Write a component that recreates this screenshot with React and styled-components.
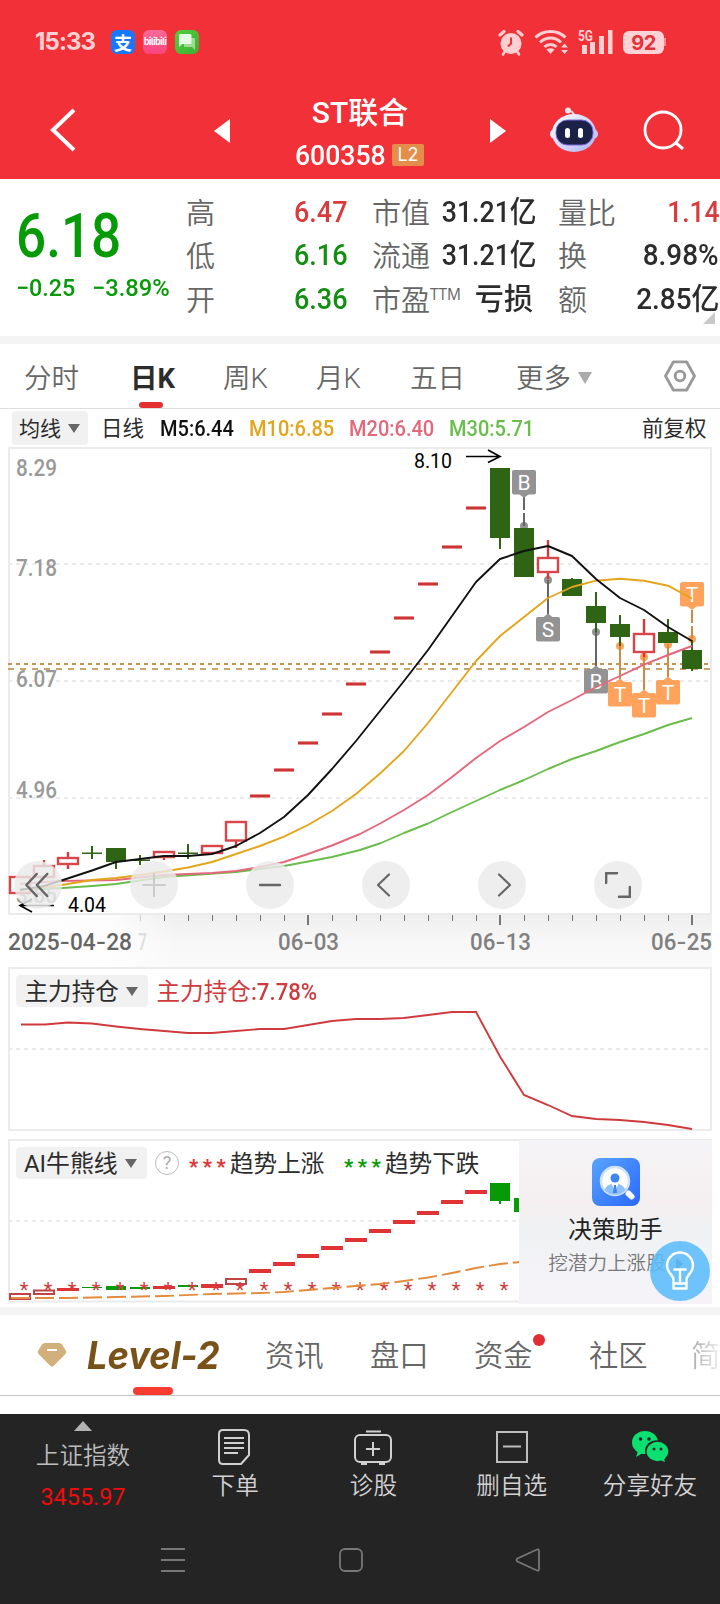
import React from "react";
import styled, { createGlobalStyle } from "styled-components";

const Global = createGlobalStyle`
  body { margin: 0; background: #fff; }
  * { box-sizing: border-box; }
  svg { display: block; flex: none; }
`;

const Page = styled.div`
  width: 720px;
  height: 1604px;
  overflow: hidden;
  display: flex;
  flex-direction: column;
  background: #fff;
  color: #333;
  font-family: Roboto, "Noto Sans CJK SC", sans-serif;
  white-space: nowrap;
`;

const Num = styled.span`
  display: inline-block;
  font-size: ${(p) => p.$size}px;
  line-height: ${(p) => p.$size}px;
  font-weight: ${(p) => p.$weight || 500};
  color: ${(p) => p.$color || "inherit"};
  transform: scaleX(${(p) => p.$sx || 0.9});
  transform-origin: ${(p) => p.$from || "left"} center;
`;

/* ---------- header ---------- */
const Header = styled.header`
  height: 179px;
  flex: none;
  background: #f23038;
  color: #fff;
`;
const StatusBar = styled.div`
  height: 80px;
  padding: 4px 54px 0 35px;
  display: flex;
  align-items: center;
  color: #ffd0d2;
`;
const AppBadges = styled.div`
  display: flex;
  gap: 8px;
  margin-left: 14px;
  flex: 1;
`;
const Clock = styled.div`
  width: 62px;
  font: 650 24px/28px Inter, sans-serif;
  letter-spacing: -0.9px;
`;
const AppBadge = styled.div`
  width: 24px;
  height: 24px;
  border-radius: 6px;
  background: ${(p) => p.$bg};
  display: flex;
  align-items: center;
  justify-content: center;
  color: #fff;
  font: 700 ${(p) => p.$size || 18}px/24px "Noto Sans CJK SC", sans-serif;
  letter-spacing: ${(p) => p.$ls || 0}px;
`;
const StatusIcons = styled.div`
  display: flex;
  align-items: center;
  gap: 10px;
`;
const Battery = styled.div`
  width: 41px;
  height: 23px;
  border-radius: 6px;
  background: #ffd3d5;
  color: #e2323a;
  text-align: center;
  font: 700 20px/24px Inter, sans-serif;
  letter-spacing: -0.5px;
`;
const BatteryNub = styled.div`
  width: 2px;
  height: 8px;
  margin-left: -10px;
  background: #fa8a8f;
`;
const NavBar = styled.div`
  height: 99px;
  display: flex;
  align-items: center;
  padding: 0 35px 0 49px;
`;
const NavTitle = styled.div`
  width: 260px;
  display: flex;
  flex-direction: column;
  align-items: center;
`;
const StockName = styled.div`
  font-size: 30px;
  line-height: 38px;
  height: 46px;
  font-weight: 500;
`;
const StockCode = styled.div`
  display: flex;
  align-items: center;
  gap: 7px;
  height: 26px;
  margin-right: 1px;
  position: relative;
  top: 2px;
`;
const LevelBadge = styled.span`
  width: 32px;
  height: 22px;
  border-radius: 2px;
  background: #e58d4a;
  font: 400 18px/22px Inter, sans-serif;
  text-align: center;
`;
const CodeBox = styled.span`
  width: 90px;
  height: 26px;
  line-height: 24px;
`;
const NavSlot = styled.div`
  width: ${(p) => p.$w}px;
  flex: none;
  display: flex;
  padding-top: ${(p) => p.$top || 0}px;
`;

/* ---------- quote ---------- */
const Quote = styled.section`
  height: 157px;
  flex: none;
  display: flex;
  position: relative;
`;
const PriceCol = styled.div`
  width: 186px;
  padding: 27px 0 0 16px;
  color: #079a07;
`;
const Changes = styled.div`
  display: flex;
  padding-top: 9px;
`;
const ChangeCell = styled.div`
  width: ${(p) => p.$w}px;
`;
const StatCol = styled.dl`
  margin: 0 ${(p) => p.$gap}px 0 0;
  width: ${(p) => p.$w}px;
  padding-top: 11px;
  flex: none;
`;
const Stat = styled.div`
  display: flex;
  justify-content: space-between;
  align-items: center;
  height: 43.5px;
`;
const StatLabel = styled.dt`
  font: 350 29px/40px "Noto Sans CJK SC", sans-serif;
  color: #666;
  margin-top: -2px;
  display: flex;
`;
const Sup = styled.sup`
  font: 400 15.5px/33px "Open Sans", sans-serif;
`;
const StatValue = styled.dd`
  margin: 0 ${(p) => p.$mr || 0}px 0 0;
  color: ${(p) => p.$color || "#2c2c2c"};
  font: 500 30px/40px Roboto, "Noto Sans CJK SC", sans-serif;
  transform: scaleX(${(p) => p.$sx || 0.9});
  transform-origin: right center;
`;
const Corner = styled.i`
  position: absolute;
  right: 5px;
  bottom: 12px;
  border-left: 12px solid transparent;
  border-bottom: 12px solid #c9c9c9;
`;
const Divider = styled.div`
  height: 8px;
  flex: none;
  background: #f4f4f4;
`;

/* ---------- period tabs ---------- */
const PeriodTabs = styled.nav`
  height: 65px;
  flex: none;
  border-bottom: 1px solid #dedede;
  display: flex;
  padding-left: 24px;
`;
const PeriodTab = styled.div`
  width: ${(p) => p.$w}px;
  height: 64px;
  padding-top: ${(p) => (p.$icon ? 0 : 4)}px;
  font-size: 27.5px;
  line-height: 59px;
  color: ${(p) => (p.$on ? "#2c2c2c" : "#666")};
  font-weight: ${(p) => (p.$on ? 700 : 350)};
  display: flex;
  align-items: center;
  gap: 7px;
  position: relative;
`;
const TabMark = styled.i`
  position: absolute;
  left: ${(p) => p.$x}px;
  bottom: 0;
  width: ${(p) => p.$w}px;
  height: ${(p) => p.$h}px;
  border-radius: 4px;
  background: ${(p) => p.$c};
`;
const Caret = styled.i`
  border: ${(p) => p.$s}px solid transparent;
  border-top: ${(p) => p.$h}px solid ${(p) => p.$c};
  border-bottom: 0;
`;

const MaRow = styled.div`
  height: 38px;
  flex: none;
  display: flex;
  align-items: center;
  padding-left: 12px;
`;
const Chip = styled.button`
  border: 0;
  margin: 0;
  width: ${(p) => p.$w}px;
  height: ${(p) => p.$h}px;
  border-radius: 4px;
  padding: 1px 0 0 ${(p) => p.$pad}px;
  background: #f1f1f1;
  display: flex;
  align-items: center;
  gap: 7px;
  color: #2c2c2c;
  font: 400 ${(p) => p.$size}px/32px Roboto, "Noto Sans CJK SC", sans-serif;
`;
const MaItem = styled.div`
  width: ${(p) => p.$w}px;
  margin-left: ${(p) => p.$ml}px;
  padding-top: 2px;
  color: ${(p) => p.$c || "#2c2c2c"};
  font-size: 21.5px;
  line-height: 30px;
`;

/* ---------- charts ---------- */
const ChartFrame = styled.section`
  height: ${(p) => p.$h}px;
  margin: 0 8px ${(p) => p.$mb || 0}px;
  flex: none;
  position: relative;
`;
const FloatBar = styled.div`
  position: absolute;
  left: 6px;
  top: 414px;
  display: flex;
  gap: 68px;
`;
const FloatButton = styled.button`
  width: 48px;
  height: 48px;
  border: 0;
  padding: 0;
  border-radius: 50%;
  background: rgba(234, 234, 234, 0.82);
  display: flex;
  align-items: center;
  justify-content: center;
`;
const PaneHead = styled.div`
  position: absolute;
  left: 8px;
  top: 8px;
  display: flex;
  align-items: center;
  height: 32px;
  font-size: 23.6px;
  line-height: 32px;
`;
const Legend = styled.span`
  margin-left: ${(p) => p.$ml || 0}px;
  padding-top: 2px;
  width: ${(p) => p.$w}px;
  color: ${(p) => p.$c || "#2c2c2c"};
`;
const Stars = styled.span`
  margin-left: ${(p) => p.$ml}px;
  width: 41px;
  color: ${(p) => p.$c};
  font: 800 20px/32px Roboto, sans-serif;
  letter-spacing: 4.6px;
  padding-top: 7px;
`;
const Help = styled.span`
  width: 24px;
  height: 24px;
  margin-left: 8px;
  border: 1.5px solid #bbb;
  border-radius: 50%;
  color: #aaa;
  text-align: center;
  font: 400 18px/22px Roboto, sans-serif;
`;
const Assistant = styled.aside`
  position: absolute;
  right: 0;
  top: 1px;
  width: 193px;
  height: 164px;
  padding-top: 18px;
  display: flex;
  flex-direction: column;
  align-items: center;
  background: linear-gradient(180deg, #f5f4f6 0%, #f5eff1 38%, #eff2f3 56%, #f4f3f7 80%, #f5f3f8 100%);
`;
const AssistantTitle = styled.div`
  margin-top: 7px;
  font-size: 23.6px;
  line-height: 35px;
  color: #222;
`;
const AssistantSub = styled.div`
  font-size: 19.6px;
  line-height: 32px;
  color: #777;
  font-weight: 350;
  display: flex;
  align-items: center;
  gap: 10px;
`;
const Play = styled.i`
  border-left: 7px solid #666;
  border-top: 6px solid transparent;
  border-bottom: 6px solid transparent;
`;
const Bulb = styled.button`
  position: absolute;
  right: 2px;
  bottom: 3px;
  width: 60px;
  height: 60px;
  border: 0;
  padding: 0;
  border-radius: 50%;
  background: rgba(92, 188, 252, 0.88);
  display: flex;
  align-items: center;
  justify-content: center;
`;

/* ---------- info tabs ---------- */
const InfoTabs = styled.nav`
  height: 81px;
  flex: none;
  display: flex;
  align-items: center;
  border-bottom: 1px solid #c6c6c6;
  padding-left: 37px;
  position: relative;
`;
const InfoTab = styled.div`
  width: ${(p) => p.$w}px;
  flex: none;
  padding-top: 2px;
  font-size: 29.3px;
  line-height: 40px;
  font-weight: 350;
  color: #666;
  position: relative;
`;
const FadedTab = styled(InfoTab)`
  background: linear-gradient(90deg, #aaa, #f0f0f0);
  -webkit-background-clip: text;
  background-clip: text;
  color: transparent;
`;
const RedDot = styled.i`
  position: absolute;
  left: 59px;
  top: 0;
  width: 12px;
  height: 12px;
  border-radius: 50%;
  background: #e02d31;
`;
const LevelTab = styled.div`
  width: 198px;
  flex: none;
  padding-left: 20px;
  color: #79521a;
  font: italic 700 38px/40px Inter, sans-serif;
`;
const LevelText = styled.span`
  display: inline-block;
  transform: scaleX(0.955);
  transform-origin: left center;
`;

/* ---------- bottom ---------- */
const Footer = styled.footer`
  margin-top: 18px;
  height: 190px;
  flex: none;
  background: #242424;
`;
const Actions = styled.div`
  display: flex;
  height: 110px;
`;
const IndexCell = styled.div`
  width: 166px;
  display: flex;
  flex-direction: column;
  align-items: center;
  padding-top: 7px;
  color: #bdbdbd;
  font-size: 23.6px;
  line-height: 34px;
  font-weight: 350;
`;
const UpCaret = styled.i`
  border: 9px solid transparent;
  border-top: 0;
  border-bottom: 10px solid #b3b3b3;
  margin-bottom: 8px;
`;
const IndexValue = styled.div`
  color: #ee0c0c;
  font: 400 23.4px/30px Roboto, sans-serif;
  margin-top: 9px;
`;
const Action = styled.div`
  width: 138.3px;
  display: flex;
  flex-direction: column;
  align-items: center;
  padding-top: 15px;
  color: #d2d2d2;
  font-size: 23.6px;
  line-height: 34px;
  font-weight: 350;
  gap: 4px;
`;
const SystemNav = styled.div`
  display: flex;
  justify-content: space-between;
  padding: 23px 179px 0 160px;
`;

/* ---------- data ---------- */
const X = (i) => 20 + 24 * i;

/* index, kind, body top, body bottom, wick top, wick bottom */
const candles = [
  [0, "u", 877, 893, 877, 893], [1, "u", 866, 877, 860, 877], [2, "u", 858, 864, 852, 869],
  [3, "g", 852.5, 854, 846, 859], [4, "g", 848, 862, 848, 869], [5, "g", 859.5, 861, 855, 865],
  [6, "u", 852, 857, 851, 860], [7, "g", 852.5, 854, 844, 859], [8, "u", 846, 853, 845, 853],
  [9, "u", 822, 840.5, 822, 848], [20, "g", 468, 538, 468, 549], [21, "g", 528, 577, 528, 577],
  [22, "u", 558, 572, 540, 579], [23, "g", 579, 596, 578, 596], [24, "g", 606, 623, 592, 632],
  [25, "g", 624, 637, 615, 646], [26, "u", 634, 652, 619, 657], [27, "g", 632, 643, 619, 643],
  [28, "g", 650, 669, 640, 671],
];
const limitUps = [796, 770, 743, 714, 684, 652, 618, 584, 547, 508];

const averages = [
  ["#69bd4a", "20,889 44,889 63,888 92,886 116,884 164,877 236,872 284,866 332,857 360,850 381,843 404,833 428,823.5 452,812 476,801 500,790 524,780 548,769 572,759 596,751 620,742 644,734 668,725 692,718"],
  ["#e4677c", "20,884 44,882 63,881 116,880 140,877.5 164,875 212,873 236,871 260,867 284,862 308,854 332,845.5 360,834 381,823 404,810 428,795 452,777 476,758 500,741 524,727 548,712 572,700 596,687 620,676 644,664.7 668,655 692,646"],
  ["#e3a51c", "20,890 44,887 63,884.7 92,880 116,878 140,875 164,871.5 188,867.5 212,862 236,854 260,846 284,836.7 308,825 332,811 356,794 380,773.5 404,751 428,723 452,692 476,661 500,636 524,617 548,598 572,587 596,580.7 620,578.7 644,580.7 668,585.7 692,598.7"],
  ["#111", "20,890 44,886 63,880 92,870.5 116,862 140,859 164,856 188,856 212,854 236,846 260,833 284,817 308,795 332,769 356,741 380,711 404,681 428,650 452,616 476,582 500,559 524,551 548,546 572,556 596,579 620,598 644,610 668,627 692,641"],
];

/* letter, colour, x, box top, dot y */
const markers = [
  ["B", "#939393", 524, 470, 526], ["S", "#939393", 548, 617, 580], ["B", "#939393", 596, 669, 632],
  ["T", "#ffa35c", 620, 682, 646], ["T", "#ffa35c", 668, 680, 644.5], ["T", "#ffa35c", 644, 693, 657],
  ["T", "#ffa35c", 692, 582, 639],
];

const bearCandles = [
  [0, "h", 1294, 1299], [1, "h", 1290.5, 1294], [2, "r", 1288, 1291], [3, "g", 1287, 1288], [4, "g", 1286, 1290],
  [5, "g", 1287, 1289], [6, "r", 1286, 1289], [7, "g", 1285, 1287], [8, "r", 1284, 1288], [9, "h", 1279, 1284],
  ...[1271, 1264, 1256, 1248, 1240, 1231, 1222, 1213, 1202, 1192].map((y, k) => [10 + k, "r", y - 2, y + 2]),
  [20, "g", 1183, 1201], [21, "g", 1198, 1212],
];

const Label = ({ x, y, w, size = 23, fill = "#999", weight = 500, children }) => (
  <text x={x} y={y} textLength={w} lengthAdjust="spacingAndGlyphs" fontFamily="Roboto" fontSize={size} fill={fill} fontWeight={weight}>
    {children.split(/(-)/).map((s, i) => (s === "-" ? <tspan key={i} fontFamily="Inter">-</tspan> : s))}
  </text>
);

const Grid = ({ ys }) => ys.map((y) => (
  <line key={y} x1="8" x2="710" y1={y} y2={y} stroke="#ebebeb" strokeWidth="2" strokeDasharray="4 4" />
));

const Marker = ({ m: [t, c, x, top, dot] }) => {
  const above = dot > top;
  const end = above ? top + 26 : top - 3;
  return (
    <g>
      <circle cx={x} cy={dot} r="4" fill={c} />
      <line x1={x} x2={x} y1={dot} y2={end} stroke={c === "#939393" ? "#666" : "#cf8c3e"} strokeWidth="2" strokeDasharray={above ? "13 3" : undefined} />
      <rect x={x - 12} y={top} width="24" height="24.5" rx="2" fill={c} />
      <path d={above ? `M${x - 5} ${top + 24}h10l-5 4z` : `M${x - 5} ${top + 0.5}h10l-5-4z`} fill={c} />
      <text x={x} y={top + 19.5} textAnchor="middle" fontFamily="Roboto" fontSize="21" fill="#fff">{t}</text>
    </g>
  );
};

const KChart = () => (
  <svg width="704" height="520" viewBox="8 447 704 520">
    <defs>
      <linearGradient id="band" x2="0" y2="1"><stop stopColor="#eeeeee" /><stop offset="0.5" stopColor="#f7f7f7" /><stop offset="1" stopColor="#fafafa" /></linearGradient>
      <linearGradient id="fade"><stop stopColor="#fff" /><stop offset="0.6" stopColor="#fff" stopOpacity="0.8" /><stop offset="1" stopColor="#fff" stopOpacity="0" /></linearGradient>
    </defs>
    <rect x="8" y="914" width="704" height="53" fill="url(#band)" />
    <rect x="8" y="915" width="170" height="52" fill="url(#fade)" />
    <rect x="9" y="448" width="702" height="466" fill="#fff" stroke="#ebebeb" strokeWidth="2" />
    <Grid ys={[564, 681, 798]} />
    <line x1="8" x2="710" y1="664" y2="664" stroke="#c99450" strokeWidth="2" strokeDasharray="4 4" />
    <line x1="8" x2="710" y1="669" y2="669" stroke="#c9a56c" strokeWidth="2" strokeDasharray="6 6" />
    <Label x={16} y={476} w={41}>8.29</Label>
    <Label x={16} y={576} w={41}>7.18</Label>
    <Label x={16} y={687} w={41}>6.07</Label>
    <Label x={16} y={798} w={41}>4.96</Label>
    <Label x={16} y={903} w={41}>3.85</Label>
    {markers.map((m, i) => <Marker key={i} m={m} />)}
    {limitUps.map((y, k) => (
      <g key={k}>
        <rect x={X(10 + k) - 10} y={y - 2} width="20" height="4" fill="#ea8c8c" />
        <rect x={X(10 + k) - 10} y={y - 1} width="20" height="2" fill="#c93636" />
      </g>
    ))}
    {candles.map(([i, k, t, b, wt, wb]) => k === "g" ? (
      <g key={i} fill="#2f6414">
        <rect x={X(i) - 10} y={t} width="20" height={b - t} />
        <rect x={X(i) - 1} y={wt} width="2" height={wb - wt} />
      </g>
    ) : (
      <g key={i}>
        <path d={`M${X(i)} ${wt}V${wb}`} stroke="#d9383a" strokeWidth="2.4" />
        <rect x={X(i) - 10} y={t} width="20" height={b - t} fill="#fff" stroke="#d9454a" strokeWidth="2.4" />
      </g>
    ))}
    {averages.map(([c, pts]) => <polyline key={c} points={pts} fill="none" stroke={c} strokeWidth="1.9" strokeLinejoin="round" />)}
    <Label x={414} y={468} w={38} size={20} fill="#000" weight={400}>8.10</Label>
    <path d="M466 456.500H500M488 450L500 456.500L488 462.500" fill="none" stroke="#000" strokeWidth="1.7" />
    <Label x={68} y={912} w={38} size={20} fill="#000" weight={400}>4.04</Label>
    <path d="M54 905.500H20M32 899L20 905.500L32 912" fill="none" stroke="#000" strokeWidth="1.7" />
    {Array.from({ length: 24 }, (_, k) => k + 5).map((i) => (
      <rect key={i} x={X(i) - (i % 8 === 4 ? 1 : 0)} y="915" width={i % 8 === 4 ? 2 : 1} height={i % 8 === 4 ? 10 : 6} fill="#777" opacity={i === 5 ? 0.3 : 1} />
    ))}
    <Label x={8} y={950} w={124} fill="#666">2025-04-28</Label>
    <Label x={138} y={950} w={9} fill="#ddd">7</Label>
    <Label x={278} y={950} w={61} fill="#808080">06-03</Label>
    <Label x={470} y={950} w={61} fill="#808080">06-13</Label>
    <Label x={651} y={950} w={61} fill="#808080">06-25</Label>
  </svg>
);

const HoldingChart = () => (
  <svg width="704" height="165" viewBox="8 967 704 165">
    <rect x="9" y="968" width="702" height="162" fill="#fff" stroke="#ebebeb" strokeWidth="2" />
    <Grid ys={[1049]} />
    <polyline fill="none" stroke="#cf3b3d" strokeWidth="1.9" points="21,1024.5 45,1024.5 68,1022.5 92,1023.5 116,1026.500 140,1029 164,1031 188,1033 212,1033 236,1031 260,1029 284,1029 308,1025 332,1021 356,1019 380,1019 404,1018 428,1015 452,1012 476,1012 500,1056.500 524,1095 548,1105 572,1116 596,1119 620,1120 644,1122 668,1125 692,1129" />
  </svg>
);

const TrendChart = () => (
  <svg width="704" height="165" viewBox="8 1139 704 165">
    <rect x="9" y="1140" width="702" height="161.500" fill="#fff" stroke="#ebebeb" strokeWidth="2" />
    <Grid ys={[1221]} />
    {bearCandles.map(([i, k, t, b]) => k === "h"
      ? <rect key={i} x={X(i) - 10} y={t} width="20" height={b - t} fill="#fff" stroke="#c04444" strokeWidth="2" />
      : <rect key={i} x={X(i) - (k === "r" ? 11 : 10)} y={t} width={k === "r" ? 22 : 20} height={b - t} fill={k === "r" ? "#df3336" : "#079a07"} />)}
    <rect x="499" y="1201" width="2" height="3" fill="#079a07" />
    {Array.from({ length: 21 }, (_, i) => (
      <text key={i} x={24 + 24 * i} y="1297" textAnchor="middle" fontFamily="Roboto" fontSize="20" fill="#cf3c3c">*</text>
    ))}
    <polyline fill="none" stroke="#e38a3c" strokeWidth="1.9" strokeDasharray="19 5" strokeDashoffset="-1" points="10,1298 68,1298 116,1297 164,1296 212,1294 260,1293 284,1292 308,1290 332,1288 356,1286 380,1284 404,1281 428,1277.500 452,1273 476,1268 500,1264 520,1262" />
  </svg>
);

const Glyph = ({ d, c = "#666", w = 2, size = 24 }) => (
  <svg width={size} height={size} viewBox="0 0 24 24"><path d={d} fill="none" stroke={c} strokeWidth={w} strokeLinecap="round" strokeLinejoin="round" /></svg>
);

export default function App() {
  return (
    <Page>
      <Global />
      <Header>
        <StatusBar>
          <Clock>15:33</Clock>
          <AppBadges>
            <AppBadge $bg="#1677ff">支</AppBadge>
            <AppBadge $bg="linear-gradient(#fb6a98,#f9447d)" $size={9} $ls={-0.7}>bilibili</AppBadge>
            <AppBadge $bg="linear-gradient(135deg,#50cf3f,#3fae30)">
              <svg width="24" height="24" viewBox="0 0 24 24">
                <path d="M9 8h10a1 1 0 0 1 1 1v11l-3-3H9z" fill="#9ed996" />
                <path d="M5 4h10a1.500 1.500 0 0 1 1.500 1.500V12A1.500 1.500 0 0 1 15 14H7l-3 3V5.500A1.500 1.500 0 0 1 5 4z" fill="#e6fbe3" />
              </svg>
            </AppBadge>
          </AppBadges>
          <StatusIcons>
            <svg width="26" height="27" viewBox="0 0 26 27">
              <circle cx="13" cy="14.500" r="10.500" fill="#ffd0d2" />
              <path d="M2 6L6 2.500M24 6L20 2.500" stroke="#ffd0d2" strokeWidth="3.200" strokeLinecap="round" />
              <path d="M6.500 23l-1.500 2.500M19.500 23l1.500 2.500" stroke="#ffd0d2" strokeWidth="2.500" strokeLinecap="round" />
              <path d="M13 8.500v6l-3 3" stroke="#f23038" strokeWidth="2" fill="none" />
            </svg>
            <svg width="34" height="26" viewBox="0 0 34 26">
              <g fill="none" stroke="#ffd0d2" strokeWidth="3">
                <path d="M1.500 8.500C9.500 .5 23.500 .5 31.500 8.500" /><path d="M6 13.500c6-6 15-6 21 0" /><path d="M10.500 18c3.500-3.500 8.500-3.500 12 0" />
              </g>
              <path d="M16.500 25l-4-4.500q4-2.500 8 0z" fill="#ffd0d2" />
              <path d="M27 18.500h7l-3.500-4zM27 21h7l-3.500 4z" fill="#ffd0d2" />
            </svg>
            <svg width="35" height="26" viewBox="0 0 35 26" fill="#ffd0d2">
              <text x="0" y="11.500" fontFamily="Roboto" fontWeight="700" fontSize="14" textLength="15" lengthAdjust="spacingAndGlyphs">5G</text>
              <rect x="4" y="16" width="5" height="9" /><rect x="12" y="13" width="5" height="12" /><rect x="21" y="7" width="5" height="18" /><rect x="30" y="1" width="4.500" height="24" />
            </svg>
            <Battery>92</Battery>
            <BatteryNub />
          </StatusIcons>
        </StatusBar>
        <NavBar>
          <NavSlot $w={165}>
            <svg width="28" height="44" viewBox="0 0 28 44"><path d="M25 2L4 22L25 42" fill="none" stroke="#fff" strokeWidth="4" /></svg>
          </NavSlot>
          <NavSlot $w={16} $top={3}>
            <svg width="16" height="24" viewBox="0 0 16 24"><path d="M16 0V24L0 12z" fill="#fff" /></svg>
          </NavSlot>
          <NavTitle>
            <StockName>ST联合</StockName>
            <StockCode>
              <CodeBox><Num $size={28} $sx={0.95}>600358</Num></CodeBox>
              <LevelBadge>L2</LevelBadge>
            </StockCode>
          </NavTitle>
          <NavSlot $w={60} $top={3}>
            <svg width="16" height="24" viewBox="0 0 16 24"><path d="M0 0V24L16 12z" fill="#fff" /></svg>
          </NavSlot>
          <NavSlot $w={93}>
            <svg width="48" height="46" viewBox="0 0 48 46">
              <defs><linearGradient id="bot" x2="1" y2="1"><stop stopColor="#fff" /><stop offset="1" stopColor="#aeb2f2" /></linearGradient></defs>
              <path d="M17 4q7-1 7 6" fill="none" stroke="#f3d9ea" strokeWidth="2" /><circle cx="18" cy="3.500" r="3" fill="#f5e3ee" />
              <circle cx="5" cy="27" r="5" fill="#f1f1ff" /><circle cx="43" cy="27" r="5" fill="#c9ccf8" />
              <ellipse cx="24" cy="26" rx="22" ry="19" fill="url(#bot)" />
              <rect x="6" y="13" width="37" height="25" rx="11.500" fill="#1c2247" stroke="#7a6be0" strokeWidth="1" />
              <rect x="15" y="21" width="5" height="10" rx="2.500" fill="#fff" /><rect x="28" y="21" width="5" height="10" rx="2.500" fill="#fff" />
            </svg>
          </NavSlot>
          <NavSlot $w={42} $top={2}>
            <svg width="42" height="42" viewBox="0 0 42 42"><circle cx="20" cy="20" r="18" fill="none" stroke="#fff" strokeWidth="2.800" /><path d="M32 32L40 39" stroke="#fff" strokeWidth="3" /></svg>
          </NavSlot>
        </NavBar>
      </Header>

      <Quote>
        <PriceCol>
          <Num $size={61} $sx={0.87}>6.18</Num>
          <Changes>
            <ChangeCell $w={76}><Num $size={24} $sx={0.97}>−0.25</Num></ChangeCell>
            <ChangeCell $w={80}><Num $size={24} $sx={0.985}>−3.89%</Num></ChangeCell>
          </Changes>
        </PriceCol>
        <StatCol $w={161} $gap={25}>
          <Stat><StatLabel>高</StatLabel><StatValue $color="#d93a3a">6.47</StatValue></Stat>
          <Stat><StatLabel>低</StatLabel><StatValue $color="#118f11">6.16</StatValue></Stat>
          <Stat><StatLabel>开</StatLabel><StatValue $color="#118f11">6.36</StatValue></Stat>
        </StatCol>
        <StatCol $w={159} $gap={27}>
          <Stat><StatLabel>市值</StatLabel><StatValue $sx={0.89} $mr={2}>31.21亿</StatValue></Stat>
          <Stat><StatLabel>流通</StatLabel><StatValue $sx={0.89} $mr={2}>31.21亿</StatValue></Stat>
          <Stat><StatLabel>市盈<Sup>TTM</Sup></StatLabel><StatValue $sx={0.97} $mr={-2}>亏损</StatValue></Stat>
        </StatCol>
        <StatCol $w={161} $gap={0}>
          <Stat><StatLabel>量比</StatLabel><StatValue $color="#d93a3a" $sx={0.88}>1.14</StatValue></Stat>
          <Stat><StatLabel>换</StatLabel><StatValue $sx={0.93}>8.98%</StatValue></Stat>
          <Stat><StatLabel>额</StatLabel><StatValue $sx={0.93}>2.85亿</StatValue></Stat>
        </StatCol>
        <Corner />
      </Quote>
      <Divider />

      <PeriodTabs>
        <PeriodTab $w={106}>分时</PeriodTab>
        <PeriodTab $w={93} $on>日K<TabMark $x={9} $w={24} $h={6} $c="#e53033" /></PeriodTab>
        <PeriodTab $w={93}>周K</PeriodTab>
        <PeriodTab $w={94}>月K</PeriodTab>
        <PeriodTab $w={106}>五日</PeriodTab>
        <PeriodTab $w={148}>更多<Caret $s={7.5} $h={12} $c="#aaa" /></PeriodTab>
        <PeriodTab $w={32} $icon>
          <svg width="32" height="32" viewBox="0 0 32 32" fill="none" stroke="#999"><path d="M9.500 1.800h13L30.500 16l-8 14.200h-13L1.500 16z" strokeWidth="2.800" strokeLinejoin="round" /><circle cx="16" cy="16" r="4.800" strokeWidth="2.800" /></svg>
        </PeriodTab>
      </PeriodTabs>
      <MaRow>
        <Chip $w={76} $h={34} $pad={7} $size={21}>均线<Caret $s={6} $h={9} $c="#666" /></Chip>
        <MaItem $ml={13} $w={43}>日线</MaItem>
        <MaItem $ml={16} $w={73} $c="#111"><Num $size={22} $sx={0.91}>M5:6.44</Num></MaItem>
        <MaItem $ml={16} $w={84} $c="#e3a51c"><Num $size={22} $sx={0.91}>M10:6.85</Num></MaItem>
        <MaItem $ml={16} $w={84} $c="#e4677c"><Num $size={22} $sx={0.91}>M20:6.40</Num></MaItem>
        <MaItem $ml={16} $w={84} $c="#69bd4a"><Num $size={22} $sx={0.91}>M30:5.71</Num></MaItem>
        <MaItem $ml={109} $w={66}>前复权</MaItem>
      </MaRow>

      <ChartFrame $h={520}>
        <KChart />
        <FloatBar>
          <FloatButton><Glyph size={28} d="M11 2.500L2 12l9 9.500M20 2.500L11 12l9 9.500" w={2} /></FloatButton>
          <FloatButton><Glyph d="M1 12h22M12 1v22" c="#ccc" /></FloatButton>
          <FloatButton><Glyph d="M2 12h20" w={2.4} /></FloatButton>
          <FloatButton><Glyph d="M15 1.500L4 12l11 10.500" w={2.2} /></FloatButton>
          <FloatButton><Glyph d="M9 1.500L20 12L9 22.500" w={2.2} /></FloatButton>
          <FloatButton><Glyph d="M1 10V1h10M13 23h10V14" w={2.4} size={26} /></FloatButton>
        </FloatBar>
      </ChartFrame>

      <ChartFrame $h={165} $mb={7}>
        <HoldingChart />
        <PaneHead>
          <Chip $w={132} $h={32} $pad={8.5} $size={23.6}>主力持仓<Caret $s={6.5} $h={9} $c="#666" /></Chip>
          <Legend $ml={8.5} $w={165} $c="#cf3b3d">主力持仓<Num $size={24} $sx={0.925} $weight={500}>:7.78%</Num></Legend>
        </PaneHead>
      </ChartFrame>

      <ChartFrame $h={165} $mb={3}>
        <TrendChart />
        <PaneHead>
          <Chip $w={131} $h={32} $pad={8} $size={23.9}>AI牛熊线<Caret $s={6.5} $h={9} $c="#666" /></Chip>
          <Help>?</Help>
          <Stars $ml={10} $c="#df3336">***</Stars>
          <Legend $w={95}>趋势上涨</Legend>
          <Stars $ml={19} $c="#079a07">***</Stars>
          <Legend $w={95}>趋势下跌</Legend>
        </PaneHead>
        <Assistant>
          <svg width="48" height="48" viewBox="0 0 48 48">
            <defs><linearGradient id="assist" x2="1" y2="1"><stop stopColor="#58a4ff" /><stop offset="1" stopColor="#2a68fa" /></linearGradient></defs>
            <rect width="48" height="48" rx="8" fill="url(#assist)" />
            <circle cx="23" cy="23" r="14" fill="#fff" stroke="#cfe2ff" strokeWidth="2.500" />
            <path d="M12.500 32q2-5 7-6l3.500 7 3.500-7q5 1 7 6A14 14 0 0 1 12.500 32z" fill="#8fc0f6" />
            <circle cx="23" cy="20" r="4.500" fill="#3f86f5" /><path d="M22 27h2l1 8h-4z" fill="#3f86f5" />
            <path d="M36.500 35.500L39.500 38.500" stroke="#fff" strokeWidth="6" strokeLinecap="round" />
          </svg>
          <AssistantTitle>决策助手</AssistantTitle>
          <AssistantSub>挖潜力上涨股<Play /></AssistantSub>
          <Bulb>
            <svg width="30" height="40" viewBox="0 0 30 40" fill="none" stroke="#fff" strokeWidth="2.400" strokeLinejoin="round">
              <path d="M8.500 28.500C8.500 24 2 22 2 14.500a13 13 0 0 1 26 0c0 7.500-6.500 9.500-6.500 14v9h-13zM8.500 32.500h13M8.500 18.500h13M15 18.500v14" />
            </svg>
          </Bulb>
        </Assistant>
      </ChartFrame>
      <Divider />

      <InfoTabs>
        <svg width="30" height="28" viewBox="0 0 30 28">
          <path d="M8 2h14q2 0 3 1.500L29 10q.5 1.500-.5 3L16.500 25q-1.500 1.500-3 0L1.500 13q-1-1.500-.5-3l4-6.500Q6 2 8 2z" fill="#d2b07c" />
          <path d="M10 9h10" stroke="#fff" strokeWidth="2" />
        </svg>
        <LevelTab><LevelText>Level-2</LevelText></LevelTab>
        <InfoTab $w={105}>资讯</InfoTab>
        <InfoTab $w={104}>盘口</InfoTab>
        <InfoTab $w={115}>资金<RedDot /></InfoTab>
        <InfoTab $w={102}>社区</InfoTab>
        <FadedTab $w={29}>简</FadedTab>
        <TabMark $x={133} $w={40} $h={8} $c="#fa3b32" />
      </InfoTabs>

      <Footer>
        <Actions>
          <IndexCell>
            <UpCaret />
            上证指数
            <IndexValue>3455.97</IndexValue>
          </IndexCell>
          <Action>
            <svg width="36" height="36" viewBox="0 0 36 36" fill="none" stroke="#d0d0d0" strokeWidth="2">
              <path d="M6 1h21q5 0 5 5v20l-8 9H6q-4 0-4-4V5q0-4 4-4z" /><path d="M7 9h20M7 14h20M7 19h20M7 24h14" />
            </svg>
            下单
          </Action>
          <Action>
            <svg width="40" height="36" viewBox="0 0 40 36" fill="none" stroke="#d0d0d0" strokeWidth="2">
              <rect x="2" y="6" width="36" height="27" rx="5" /><path d="M13 2.500h15M20 13v14M13 20h14M8 35h6M26 35h6" />
            </svg>
            诊股
          </Action>
          <Action>
            <svg width="36" height="36" viewBox="0 0 36 36" fill="none" stroke="#bdbdbd" strokeWidth="2">
              <path d="M3 3h30v30H3zM9 17.500h18" />
            </svg>
            删自选
          </Action>
          <Action>
            <svg width="38" height="36" viewBox="0 0 38 36">
              <ellipse cx="14" cy="13.500" rx="13" ry="11.500" fill="#0be070" /><path d="M7 22l-2 6 7-4z" fill="#0be070" />
              <ellipse cx="26" cy="22" rx="12" ry="10.800" fill="#242424" />
              <ellipse cx="26.500" cy="22.500" rx="10.800" ry="9.700" fill="#0be070" /><path d="M29 31l5 2-1-4z" fill="#0be070" />
              <g fill="#242424"><circle cx="9.500" cy="10" r="1.800" /><circle cx="18" cy="10" r="1.800" /><circle cx="23" cy="20" r="1.500" /><circle cx="30" cy="20" r="1.500" /></g>
            </svg>
            分享好友
          </Action>
        </Actions>
        <SystemNav>
          <svg width="26" height="26" viewBox="0 0 26 26"><path d="M1 2h24M1 13h24M1 24h24" stroke="#777" strokeWidth="2" /></svg>
          <svg width="26" height="26" viewBox="0 0 26 26"><rect x="2" y="2" width="22" height="22" rx="5" fill="none" stroke="#777" strokeWidth="1.800" /></svg>
          <svg width="26" height="26" viewBox="0 0 26 26"><path d="M22 2.500q2-.7 2 1.500v18q0 2.200-2 1.500L2.500 14.500q-2-1.500 0-3z" fill="none" stroke="#777" strokeWidth="1.800" /></svg>
        </SystemNav>
      </Footer>
    </Page>
  );
}
